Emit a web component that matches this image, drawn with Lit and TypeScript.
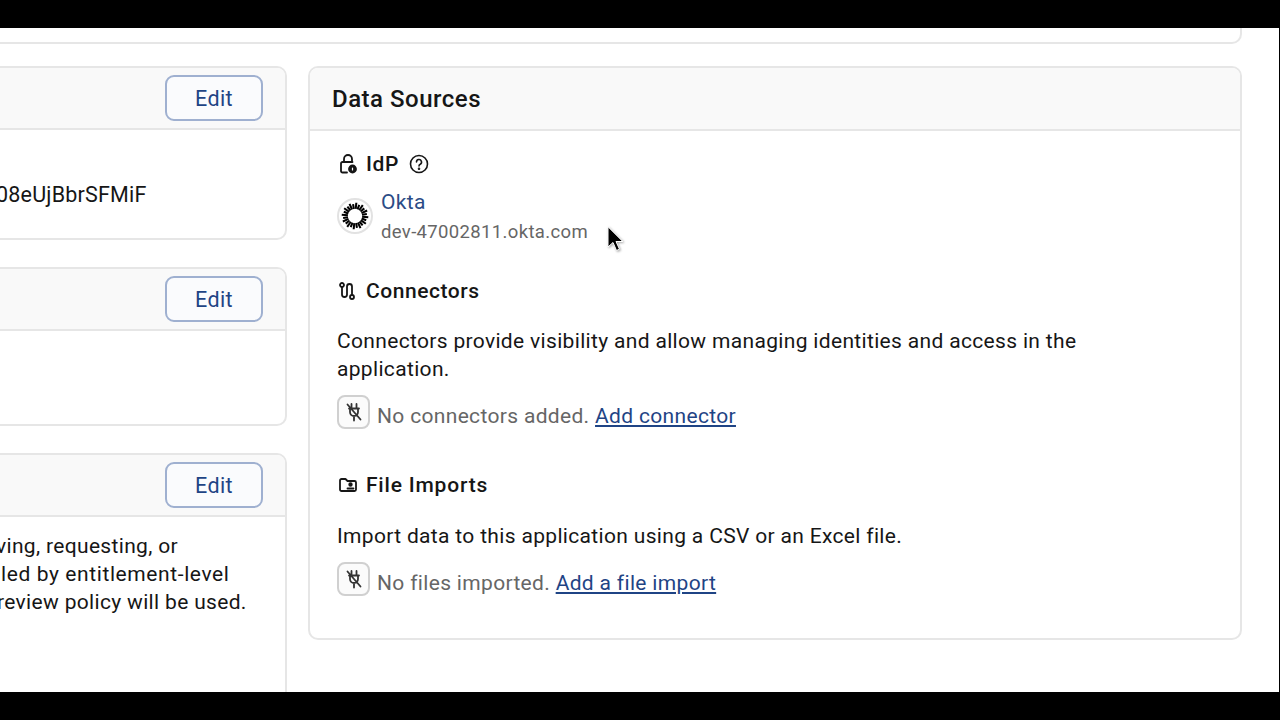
import { LitElement, html, css, svg } from "lit";
import { customElement } from "lit/decorators.js";

const rays = Array.from({ length: 24 }, (_, i) => {
  const a = (i / 24) * Math.PI * 2 + 0.1;
  const r1 = 8, r2 = i % 2 ? 13.500 : 15;
  return svg`<line x1=${18 + r1 * Math.cos(a)} y1=${18 + r1 * Math.sin(a)} x2=${18 + r2 * Math.cos(a)} y2=${18 + r2 * Math.sin(a)}></line>`;
});

const plugOff = html`<svg class="plug" viewBox="0 0 20 20"><path d="M7.500 2v4.500M12.500 2v4.500M5 6.500h10M6 6.500v3.500a4 4 0 0 0 8 0V6.500M10 14v4.500M3.500 2.500l13 15"></path></svg>`;

@customElement("app-root")
export class AppRoot extends LitElement {
  static styles = css`
    :host { display: block; width: 1280px; height: 720px; background: #000; overflow: hidden;
      font-family: Roboto, "Noto Sans", sans-serif; color: #161616; }
    .stage { position: relative; margin-top: 28px; width: 1279px; height: 664px; background: #fff; overflow: hidden; padding: 0 37px 0 0; box-sizing: border-box; }
    .top { height: 16px; margin-left: -20px; border: 2px solid #e6e6e6; border-top: 0; border-radius: 0 0 10px 10px; box-sizing: border-box; }
    .cols { display: flex; gap: 21px; margin-top: 22px; align-items: flex-start; }
    .left { flex: 0 0 287px; display: flex; flex-direction: column; gap: 27px; overflow: hidden; height: 626px; }
    .card { border: 2px solid #e6e6e6; border-radius: 10px; box-sizing: border-box; background: #fff; flex: none; }
    .left .card { margin-left: -20px; }
    .head { height: 60px; background: #f9f9f9; border-bottom: 2px solid #e6e6e6; border-radius: 8px 8px 0 0; display: flex; align-items: center; justify-content: flex-end; padding-right: 22px; }
    .edit { width: 98px; height: 46px; box-sizing: border-box; padding-top: 2px; border: 2px solid #9fb0d0; border-radius: 9px; background: #fafbfd; color: #1f4485; font: 400 21.5px/1 Roboto, sans-serif; display: flex; align-items: center; justify-content: center; letter-spacing: .4px; }
    .c1 { height: 174px; } .c2 { height: 159px; } .c3 { height: 300px; }
    .hash { font-size: 21.500px; line-height: 28px; padding: 51px 0 0 14px; letter-spacing: .2px; white-space: nowrap; }
    .desc { padding-top: 15px; font-size: 21px; line-height: 28px; white-space: nowrap; letter-spacing: .33px; }
    .l1 { margin-left: 14px; } .l2 { margin-left: 19px; letter-spacing: .6px; } .l3 { margin-left: 15px; }
    .right { flex: 1; height: 574px; }
    .title { height: 61px; background: #f9f9f9; border-bottom: 2px solid #e6e6e6; border-radius: 8px 8px 0 0; padding-left: 22px; display: flex; align-items: center; font-size: 24px; font-weight: 500; letter-spacing: .5px; }
    .body { padding: 19px 27px 0; }
    .sub { display: flex; align-items: center; height: 28px; font-size: 21px; font-weight: 500; letter-spacing: .55px; }
    .sub .ic { width: 20px; height: 20px; margin: 0 8px 0 1px; flex: none; stroke-width: 1.800; }
    .sub .help { width: 20px; height: 20px; margin-left: 10px; }
    svg { fill: none; stroke: #161616; stroke-width: 1.6; stroke-linecap: round; stroke-linejoin: round; display: block; }
    .okta { display: flex; gap: 8px; margin-top: 10px; height: 59px; }
    .logo { width: 36px; height: 36px; margin-top: 10px; border-radius: 50%; border: 2px solid #e2e2e2; box-sizing: border-box; background: #fff; flex: none; }
    .logo svg { width: 32px; height: 32px; stroke-width: 2.300; stroke: #000; stroke-linecap: butt; }
    .oname { color: #2b4c86; font-size: 21px; line-height: 28px; letter-spacing: .35px; }
    .odom { color: #666; font-size: 18.500px; line-height: 30px; margin-top: 1px; letter-spacing: .35px; }
    .para { font-size: 21px; line-height: 28px; letter-spacing: .33px; margin-top: 22px; width: 770px; }
    .p2 { margin-top: 23px; }
    .empty { display: flex; align-items: center; gap: 7px; color: #666; font-size: 21px; letter-spacing: .33px; margin-top: 13px; height: 34px; }
    .box { width: 33px; height: 34px; box-sizing: border-box; border: 2px solid #d0d0d0; border-radius: 8px; background: #fbfbfb; display: flex; align-items: center; justify-content: center; margin-top: -2px; flex: none; }
    .plug { width: 20px; height: 20px; stroke: #333; stroke-width: 1.800; }
    .empty span { padding-top: 5px; }
    a { color: #1f4485; text-decoration: underline; }
    .s-conn { margin-top: 30px; }
    .s-file { margin-top: 41px; letter-spacing: .8px; }
    .cursor { position: absolute; left: 606px; top: 197px; width: 18px; height: 30px; filter: drop-shadow(1px 1px 1px rgba(0,0,0,.35)); }
    .cursor svg { width: 18px; height: 30px; stroke: #fff; stroke-width: 1; fill: #000; }
  `;

  render() {
    return html`<div class="stage">
      <div class="top"></div>
      <div class="cols">
        <div class="left">
          <div class="card c1">
            <div class="head"><div class="edit">Edit</div></div>
            <div class="hash">08eUjBbrSFMiF</div>
          </div>
          <div class="card c2"><div class="head"><div class="edit">Edit</div></div></div>
          <div class="card c3">
            <div class="head"><div class="edit">Edit</div></div>
            <div class="desc">
              <div class="l1">ving, requesting, or</div>
              <div class="l2">led by entitlement-level</div>
              <div class="l3">review policy will be used.</div>
            </div>
          </div>
        </div>
        <div class="card right">
          <div class="title">Data Sources</div>
          <div class="body">
            <div class="sub">
              <svg class="ic" viewBox="0 0 20 20"><path d="M6 8V5a4 4 0 0 1 8 0v3M9 18.500H4.500A1.500 1.500 0 0 1 3 17V9.500A1.500 1.500 0 0 1 4.500 8h10"></path><circle cx="14.500" cy="15" r="3.500" fill="#161616"></circle><path d="M14.500 14v2" stroke="#fff" stroke-width="1.200"></path></svg>
              IdP
              <svg class="help" viewBox="0 0 20 20"><circle cx="10" cy="10" r="8.500"></circle><path d="M7.500 8a2.500 2.500 0 1 1 3.700 2.200c-.8.400-1.200 1-1.200 1.800"></path><circle cx="10" cy="14.800" r=".5" fill="#161616"></circle></svg>
            </div>
            <div class="okta">
              <div class="logo"><svg viewBox="0 0 36 36">${rays}</svg></div>
              <div>
                <div class="oname">Okta</div>
                <div class="odom">dev-47002811.okta.com</div>
              </div>
            </div>
            <div class="sub s-conn">
              <svg class="ic" viewBox="0 0 20 20"><circle cx="4" cy="4" r="2"></circle><path d="M4 6v7.500a2.500 2.500 0 0 0 5 0V5.500a2.500 2.500 0 0 1 5 0V14"></path><circle cx="14" cy="16" r="2"></circle></svg>
              Connectors
            </div>
            <div class="para">Connectors provide visibility and allow managing identities and access in the application.</div>
            <div class="empty"><div class="box">${plugOff}</div><span>No connectors added. <a href="#">Add connector</a></span></div>
            <div class="sub s-file">
              <svg class="ic" viewBox="0 0 20 20"><path d="M2 5.500A1.500 1.500 0 0 1 3.500 4h4l2 2h7A1.500 1.500 0 0 1 18 7.500v7a1.500 1.500 0 0 1-1.500 1.500h-13A1.500 1.500 0 0 1 2 14.500z"></path><circle cx="12.500" cy="9.500" r="1.300" fill="#161616"></circle><path d="M9.500 13.500h6"></path></svg>
              File Imports
            </div>
            <div class="para p2">Import data to this application using a CSV or an Excel file.</div>
            <div class="empty"><div class="box">${plugOff}</div><span>No files imported. <a href="#">Add a file import</a></span></div>
          </div>
        </div>
      </div>
      <div class="cursor"><svg viewBox="0 0 18 28"><path d="M2 1v20l5-4.500 3.500 8 3-1.300-3.500-7.700h6.500z"></path></svg></div>
    </div>`;
  }
}
